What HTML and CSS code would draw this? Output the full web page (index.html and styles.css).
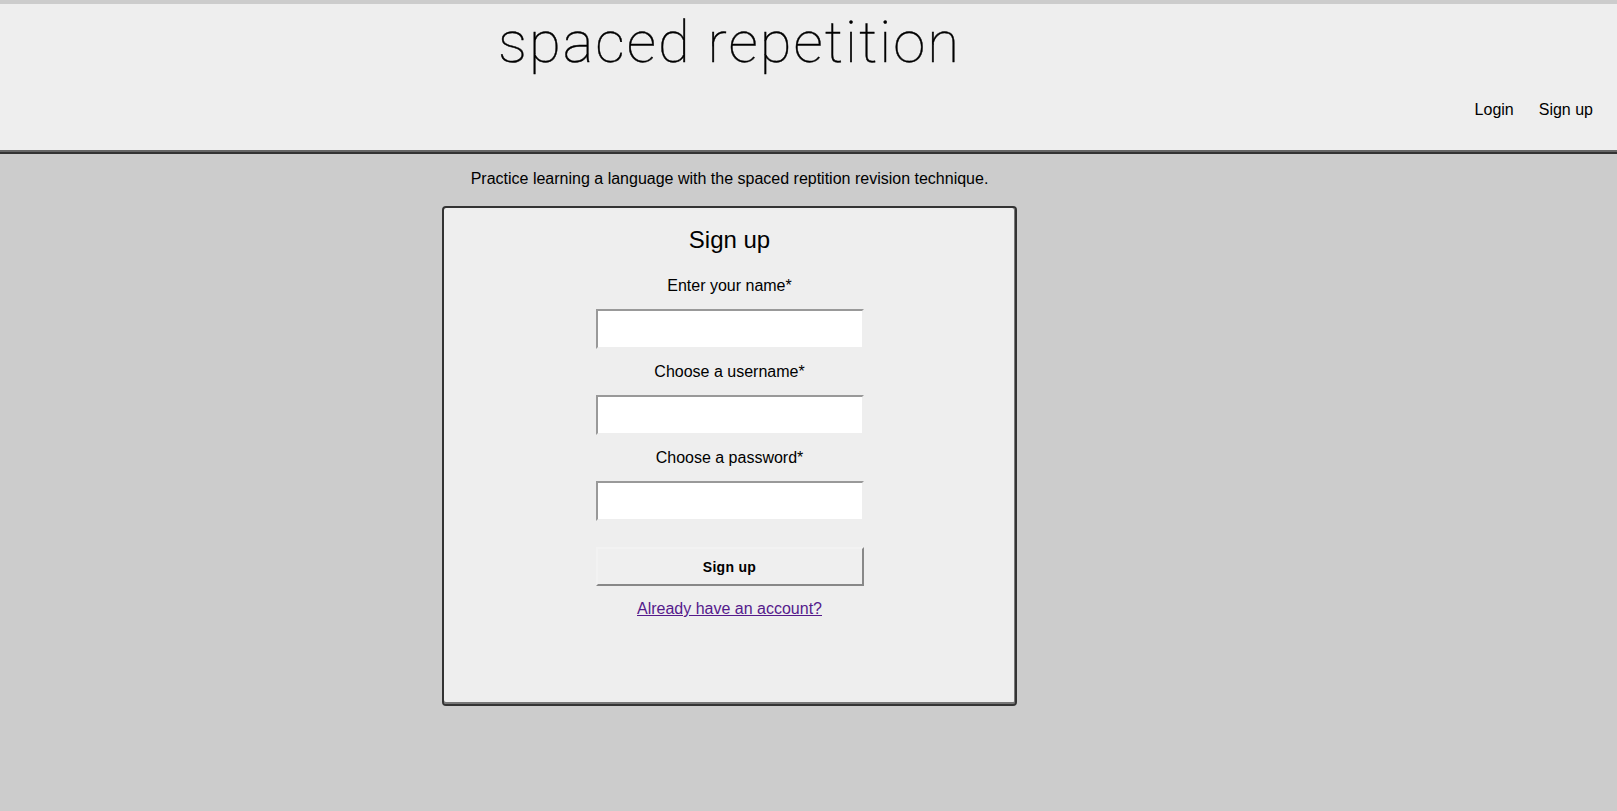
FILE: index.html
```html
<!DOCTYPE html>
<html lang="en">
<head>
<meta charset="utf-8">
<title>spaced repetition</title>
<link rel="stylesheet" href="styles.css">
</head>
<body>
<header class="site-header">
  <div class="brand">
    <h1 class="brand-title">spaced repetition</h1>
  </div>
  <nav class="site-nav">
    <a class="nav-link" href="#">Login</a>
    <a class="nav-link" href="#">Sign up</a>
  </nav>
</header>
<main class="main">
  <p class="tagline">Practice learning a language with the spaced reptition revision technique.</p>
  <form class="card">
    <h2 class="card-title">Sign up</h2>
    <label class="field-label" for="name">Enter your name*</label>
    <input class="field-input" id="name" type="text">
    <label class="field-label" for="username">Choose a username*</label>
    <input class="field-input" id="username" type="text">
    <label class="field-label" for="password">Choose a password*</label>
    <input class="field-input field-input-last" id="password" type="password">
    <button class="submit" type="button">Sign up</button>
    <a class="alt-link" href="#">Already have an account?</a>
  </form>
</main>
</body>
</html>
```
FILE: styles.css
```css
html, body {
  margin: 0;
  padding: 0;
}
body {
  background: #cccccc;
  font-family: "Liberation Sans", Arial, sans-serif;
  font-size: 16px;
  color: #000;
  min-height: 811px;
}
.site-header {
  display: flex;
  background: #eeeeee;
  border-top: 4px solid #cccccc;
  border-bottom: 2px solid #333333;
  box-shadow: inset 0 -2px 0 #666666;
  box-sizing: border-box;
  height: 154px;
}
.brand {
  flex: 1;
  display: flex;
  justify-content: center;
  padding-top: 9px;
}
.brand-title {
  margin: 0;
  font-family: Roboto, "DejaVu Sans", sans-serif;
  font-weight: 100;
  font-size: 58px;
  line-height: 1;
  letter-spacing: 2px;
  color: #000;
  -webkit-text-stroke: 0.4px #000;
}
.site-nav {
  width: 158px;
  box-sizing: border-box;
  display: flex;
  justify-content: flex-end;
  align-items: flex-end;
  gap: 25px;
  padding-right: 24px;
  padding-bottom: 32px;
}
.nav-link {
  color: #000;
  text-decoration: none;
  font-size: 16px;
  line-height: 20px;
}
.main {
  display: flex;
  flex-direction: column;
  align-items: center;
  padding-right: 158px;
}
.tagline {
  margin: 16px 0 18px;
  line-height: 18px;
  font-size: 16px;
}
.card {
  width: 575px;
  height: 500px;
  box-sizing: border-box;
  background: #eeeeee;
  border: 2px solid #333333;
  border-radius: 4px;
  box-shadow: inset 0 -2px 0 #777777, inset -1px 0 0 #777777;
  padding-top: 18px;
  display: flex;
  flex-direction: column;
  align-items: center;
}
.card-title {
  margin: 0 0 22px;
  font-size: 24px;
  line-height: 28px;
  font-weight: normal;
}
.field-label {
  display: block;
  line-height: 20px;
  margin-bottom: 13px;
}
.field-input {
  width: 268px;
  height: 40px;
  box-sizing: border-box;
  margin: 0 0 13px;
  padding: 0 4px;
  background: #ffffff;
  border-style: solid;
  border-width: 2px;
  border-color: #999999 #eeeeee #eeeeee #999999;
  font-family: inherit;
  font-size: 16px;
}
.field-input-last {
  margin-bottom: 26px;
}
.submit {
  width: 268px;
  height: 39px;
  box-sizing: border-box;
  background: #efefef;
  border-style: solid;
  border-width: 2px;
  border-color: #f2f2f2 #888888 #888888 #f2f2f2;
  font-family: "Liberation Sans", Arial, sans-serif;
  font-weight: bold;
  font-size: 14px;
  letter-spacing: 0.3px;
  color: #000;
  padding: 0;
}
.alt-link {
  margin-top: 13px;
  line-height: 20px;
  color: #551a8b;
  text-decoration: underline;
}
```
